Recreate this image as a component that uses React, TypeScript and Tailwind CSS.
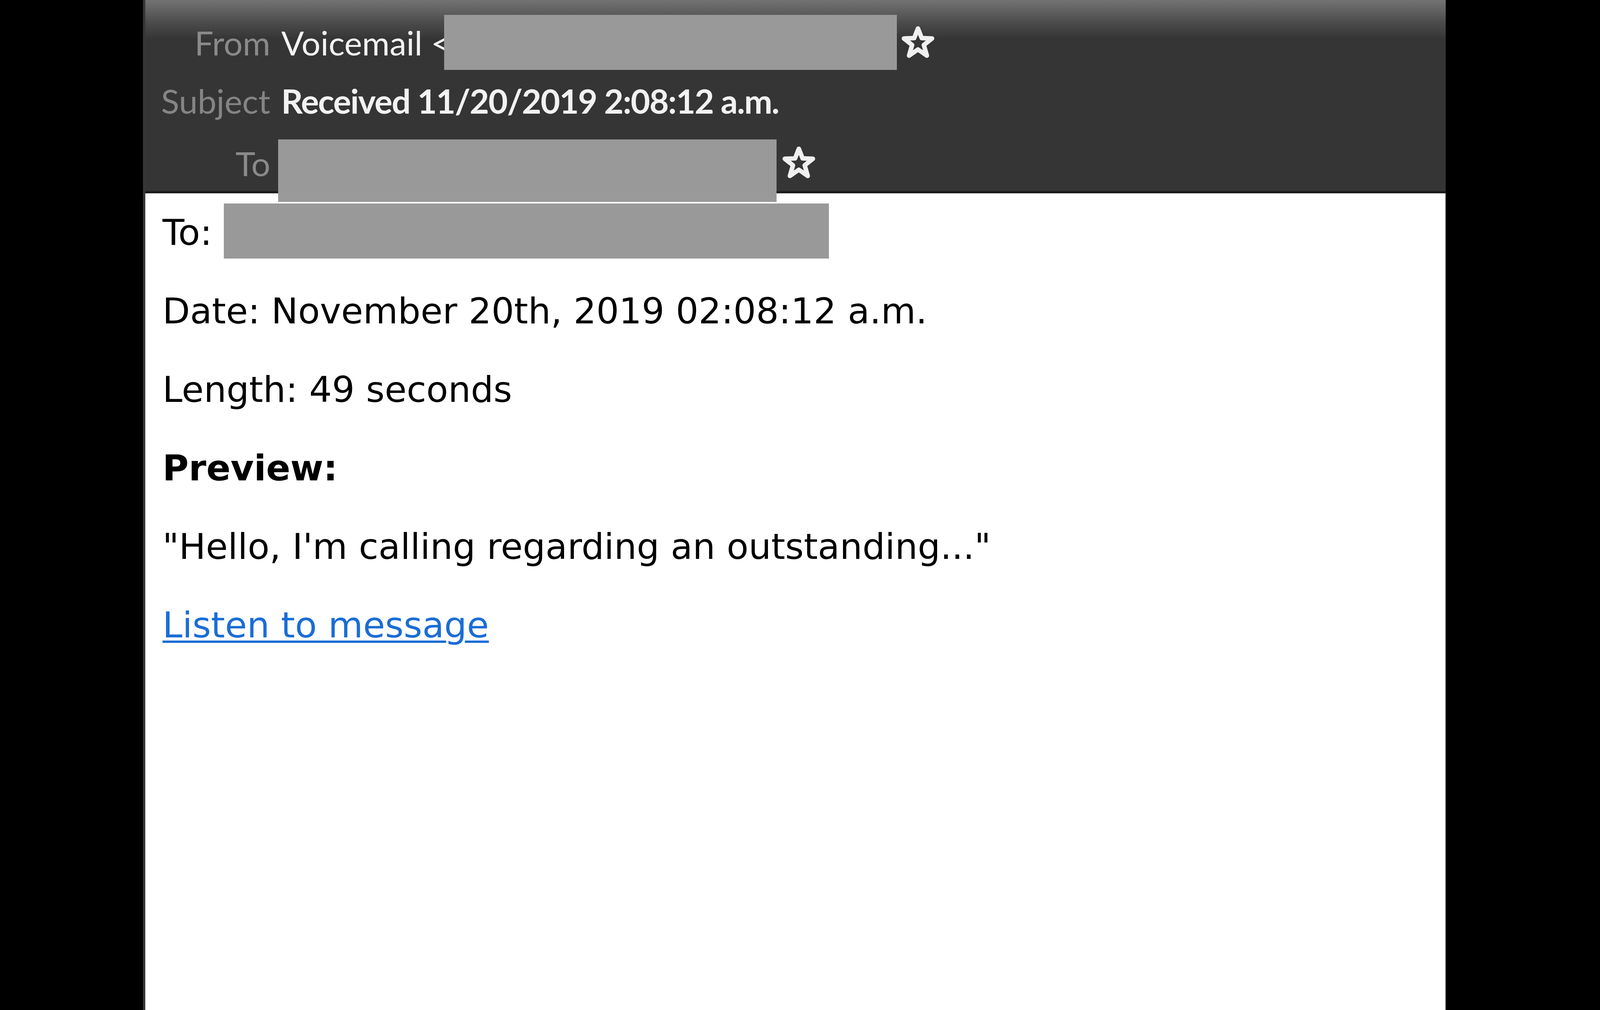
function Star() {
  return (
    <svg viewBox="0 0 100 100" className="h-[88px] w-[90px] shrink-0" fill="none">
      <polygon
        points="50,9 61,37 91,38 67,57 76,88 50,70 24,88 33,57 9,38 39,37"
        stroke="#f0f0f0"
        strokeWidth="13"
        strokeLinejoin="round"
      />
    </svg>
  );
}

function Redacted({ className }: { className: string }) {
  return <div className={`relative z-10 shrink-0 bg-[#999999] ${className}`} />;
}

export default function App() {
  return (
    <div className="flex h-[2586px] w-full overflow-hidden bg-black">
      <div className="ml-[366px] mr-[395px] flex h-full min-w-0 flex-1 flex-col border-l-[6px] border-[#363636] bg-white">
        {/* message header */}
        <header className="flex h-[495px] shrink-0 flex-col border-b-[6px] border-[#1c1c1c] bg-[linear-gradient(to_bottom,#737373_0px,#4a4a4a_60px,#353535_100px)] pt-[38px] font-['Lato',sans-serif] text-[86px] text-[#f2f2f2]">
          <div className="flex h-[141px] shrink-0 items-center">
            <span className="w-[320px] shrink-0 text-right text-[#8a8a8a]">From</span>
            <span className="ml-[28px] whitespace-pre">Voicemail &lt;</span>
            <Redacted className="-ml-[16px] h-[141px] w-[1159px]" />
            <div className="ml-[9px]">
              <Star />
            </div>
          </div>
          <div className="flex h-[156px] shrink-0 items-center">
            <span className="w-[320px] shrink-0 text-right text-[#858585]">Subject</span>
            <span className="ml-[28px] font-bold tracking-[-2px]">Received 11/20/2019 2:08:12 a.m.</span>
          </div>
          <div className="flex h-[164px] shrink-0 items-center">
            <span className="w-[320px] shrink-0 text-right text-[#8a8a8a]">To</span>
            <Redacted className="ml-[20px] mt-[22px] h-[160px] w-[1276px] self-start" />
            <div className="ml-[12px]">
              <Star />
            </div>
          </div>
        </header>

        {/* message body */}
        <main className="flex-1 border-r-2 border-[#c4c4c4] pl-[44px] font-['DejaVu_Sans',sans-serif] text-[91.5px] leading-[201px] text-black">
          <div className="flex items-center">
            <span>To:</span>
            <Redacted className="-mt-[8px] ml-[30px] h-[141px] w-[1549px]" />
          </div>
          <p>Date: November 20th, 2019 02:08:12 a.m.</p>
          <p>Length: 49 seconds</p>
          <p className="font-bold">Preview:</p>
          <p>"Hello, I'm calling regarding an outstanding..."</p>
          <p>
            <a href="#" className="text-[#1a6dd6] underline decoration-[length:6px] underline-offset-[8px]">
              Listen to message
            </a>
          </p>
        </main>
      </div>
    </div>
  );
}
